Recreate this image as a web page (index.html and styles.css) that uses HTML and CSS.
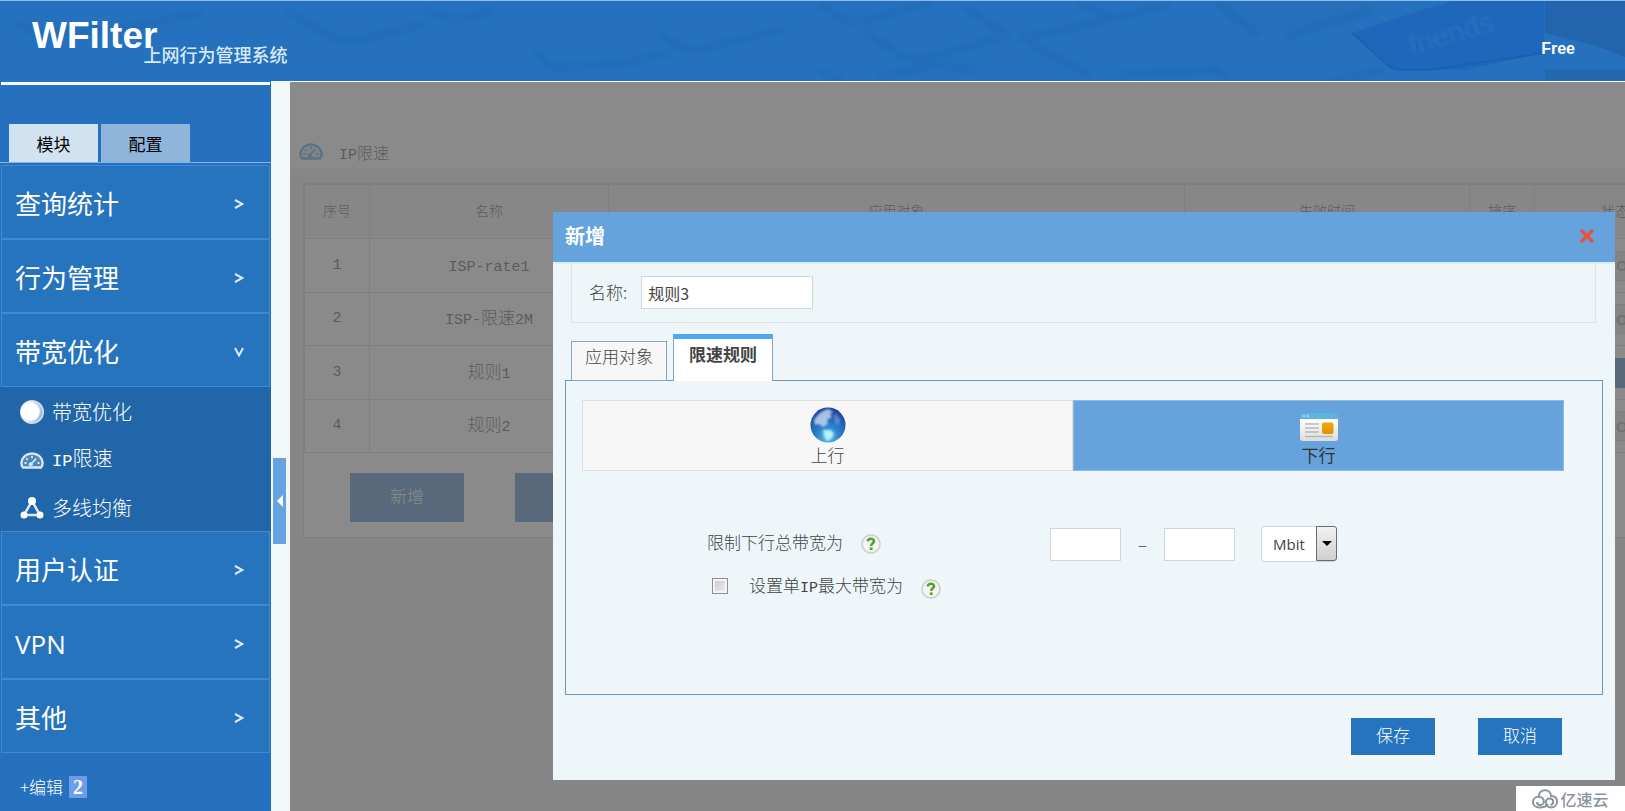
FILE: index.html
```html
<!DOCTYPE html>
<html lang="zh-CN">
<head>
<meta charset="utf-8">
<title>WFilter 上网行为管理系统</title>
<link rel="stylesheet" href="styles.css">
</head>
<body>
<svg width="0" height="0" class="defs" aria-hidden="true">
  <defs>
    <radialGradient id="globe" cx="50%" cy="85%" r="85%">
      <stop offset="0" stop-color="#5cc3e8"/><stop offset=".4" stop-color="#2a7fc8"/><stop offset="1" stop-color="#1a3c96"/>
    </radialGradient>
    <radialGradient id="ball" cx="42%" cy="48%" r="50%">
      <stop offset="0" stop-color="#fff"/><stop offset=".75" stop-color="#fff"/><stop offset="1" stop-color="#fff" stop-opacity="0"/>
    </radialGradient>
    <linearGradient id="paper" x1="0" y1="0" x2="0" y2="1">
      <stop offset="0" stop-color="#ffffff"/><stop offset="1" stop-color="#dcdcdc"/>
    </linearGradient>
    <linearGradient id="gold" x1="0" y1="0" x2="0" y2="1">
      <stop offset="0" stop-color="#f0a800"/><stop offset="1" stop-color="#e58f08"/>
    </linearGradient>
    <filter id="soft"><feGaussianBlur stdDeviation="2"/></filter>
    <filter id="soft-word"><feGaussianBlur stdDeviation="1"/></filter>
    <symbol id="gauge" viewBox="0 0 24 17">
      <path d="M3 15.500C1.500 14 1.200 12 1.500 10 2.200 5 6.500 1.500 12 1.500s9.800 3.500 10.500 8.500c.3 2 0 4-1.500 5.500z" fill="currentColor" fill-opacity=".25" stroke="currentColor" stroke-width="2.400"/>
      <path d="M4.500 11h2M6.200 6.500l1.500 1.300M12 4v2.200M17.500 11h2M10.800 12.500l5.400-6" fill="none" stroke="currentColor" stroke-width="1.800"/>
      <circle cx="10.800" cy="12.300" r="2" fill="currentColor"/>
    </symbol>
    <symbol id="help" viewBox="0 0 20 20">
      <circle cx="10" cy="10" r="9" fill="#f3f5f3" stroke="#cfd2d3" stroke-width="1.800"/>
      <path d="M6.800 7.400C7 5.400 8.400 4.800 10 4.800c1.700 0 3 .9 3 2.500 0 2.100-2.800 2-2.800 4.600" fill="none" stroke="#5a9e2d" stroke-width="2.600"/>
      <rect x="8.800" y="13.400" width="2.800" height="2.600" fill="#5a9e2d"/>
    </symbol>
    <symbol id="chevron" viewBox="0 0 10 10">
      <path d="M1 1l7.500 4L1 9" fill="none" stroke="#d9edfb" stroke-width="2"/>
    </symbol>
  </defs>
</svg>

<header class="header">
  <svg class="header-art" viewBox="0 0 1625 80" preserveAspectRatio="xMidYMid slice" aria-hidden="true">
    <g fill="none" stroke="#1f5ea8" stroke-opacity=".4" stroke-width="5" filter="url(#soft)">
      <path d="M15 22l25 12 90-8 72-14M288 10l40 24q18 10 35 4l60-14M425 8q30 20 70-1M536 52l16 15 70-4 48-12M660 32l22 16q12 3 20 0l82-20M820 4l28 16q12 2 24-2l60-18M864 30l40 26q12 4 24 1l72-20M965 6l45 30M1020 38l84-18M1080 2l30 16 60-14M1030 42l60 32M1218 2l38 32M1285 36l85-26"/>
      <path d="M820 70l22 10M880 76l55-12 40 5M1216 70l16 10M1330 80l52-10M1120 74l100-6"/>
    </g>
    <path d="M1352 32l60-20 40-12h92v52l-80 17h-64q-10-1-14-6z" fill="#1c60b8" fill-opacity=".6"/>
    <path d="M1352 32l34 31q6 6 14 6h30l114-17" fill="none" stroke="#1b5599" stroke-opacity=".4" stroke-width="2"/>
    <path d="M1256 34l-38-34h165v10z" fill="#2767ae" fill-opacity=".2"/>
    <path d="M1545 0h80v56l-32-12-48-12z" fill="#205690" fill-opacity=".4"/>
    <path d="M1545 68h80v12h-80z" fill="#205690" fill-opacity=".3"/>
    <text x="1412" y="54" class="art-word" transform="rotate(-16 1412 54)" filter="url(#soft-word)">friends</text>
  </svg>
  <div class="brand"><span class="brand-name">WFilter</span><span class="brand-sub">上网行为管理系统</span></div>
  <span class="edition">Free</span>
</header>

<div class="layout">
  <nav class="sidebar">
    <div class="rule"></div>
    <div class="side-tabs">
      <button type="button" class="side-tab side-tab-on">模块</button>
      <button type="button" class="side-tab">配置</button>
    </div>
    <ul class="menu">
      <li><a class="menu-item" href="#"><span>查询统计</span><svg class="chev"><use href="#chevron"/></svg></a></li>
      <li><a class="menu-item" href="#"><span>行为管理</span><svg class="chev"><use href="#chevron"/></svg></a></li>
      <li><a class="menu-item" href="#"><span>带宽优化</span><svg class="chev chev-down"><use href="#chevron"/></svg></a>
        <ul class="submenu">
          <li><a class="sub-item" href="#"><svg class="sub-icon" viewBox="0 0 24 24"><circle cx="12" cy="12" r="11" fill="#7fa9d2" stroke="#c9dcee" stroke-width="2"/><circle cx="12" cy="12" r="11.500" fill="url(#ball)"/></svg>带宽优化</a></li>
          <li><a class="sub-item" href="#"><svg class="sub-icon gauge-light"><use href="#gauge"/></svg><span><span class="lat">IP</span>限速</span></a></li>
          <li><a class="sub-item" href="#"><svg class="sub-icon" viewBox="0 0 24 24"><path d="M12 5L4 19h16z" fill="none" stroke="#dcebf7" stroke-width="2.500"/><circle cx="12" cy="5" r="4" fill="#fff"/><circle cx="4" cy="19" r="3.500" fill="#fff"/><circle cx="20" cy="19" r="3.500" fill="#fff"/></svg>多线均衡</a></li>
        </ul>
      </li>
      <li><a class="menu-item" href="#"><span>用户认证</span><svg class="chev"><use href="#chevron"/></svg></a></li>
      <li><a class="menu-item" href="#"><span>VPN</span><svg class="chev"><use href="#chevron"/></svg></a></li>
      <li><a class="menu-item" href="#"><span>其他</span><svg class="chev"><use href="#chevron"/></svg></a></li>
    </ul>
    <div class="side-foot"><a href="#">+编辑</a><span class="count">2</span></div>
  </nav>

  <div class="gutter">
    <button type="button" class="handle" aria-label="收起"><svg viewBox="0 0 6 12" width="6" height="12"><path d="M6 0v12L0 6z" fill="#fff"/></svg></button>
  </div>

  <main class="main">
    <div class="page-title"><svg class="title-icon"><use href="#gauge"/></svg><h1><span class="lat">IP</span>限速</h1></div>
    <section class="card">
      <table class="rules">
        <colgroup><col class="c-no"><col class="c-name"><col class="c-target"><col class="c-time"><col class="c-sort"><col class="c-state"></colgroup>
        <thead><tr><th>序号</th><th>名称</th><th>应用对象</th><th>生效时间</th><th>排序</th><th>状态</th></tr></thead>
        <tbody>
          <tr><td class="lat">1</td><td><span class="lat">ISP-rate1</span></td><td></td><td></td><td></td><td><button type="button" class="switch">ON</button></td></tr>
          <tr><td class="lat">2</td><td><span class="lat">ISP-</span>限速<span class="lat">2M</span></td><td></td><td></td><td></td><td><button type="button" class="switch">ON</button></td></tr>
          <tr><td class="lat">3</td><td>规则<span class="lat">1</span></td><td></td><td></td><td></td><td><button type="button" class="switch switch-on" aria-label="ON"></button></td></tr>
          <tr><td class="lat">4</td><td>规则<span class="lat">2</span></td><td></td><td></td><td></td><td><button type="button" class="switch">ON</button></td></tr>
        </tbody>
      </table>
      <div class="card-actions"><button type="button" class="btn btn-lg">新增</button><button type="button" class="btn btn-lg" aria-label="删除"></button></div>
    </section>
    <div class="mask"></div>
  </main>
</div>

<div class="dialog" role="dialog" aria-labelledby="dlg-title">
  <div class="dialog-head">
    <h2 id="dlg-title">新增</h2>
    <button type="button" class="close" aria-label="关闭"><svg viewBox="0 0 16 16" width="16" height="16"><path d="M2 2l12 12M14 2L2 14" stroke="#e5543f" stroke-width="3.500"/></svg></button>
  </div>
  <div class="name-row"><label for="rule-name">名称:</label><input id="rule-name" class="field" type="text" value="规则3"></div>
  <div class="tabs">
    <button type="button" class="tab">应用对象</button>
    <button type="button" class="tab tab-on">限速规则</button>
  </div>
  <div class="panel">
    <div class="direction">
      <button type="button" class="dir">
        <svg viewBox="0 0 36 36" width="36" height="36"><circle cx="18" cy="18" r="17.500" fill="url(#globe)"/><g filter="url(#soft-word)"><path d="M7 9q5-6 12-7l4 3-3 2 2 3-5 3 1 4-5 3-4-3-4 1-1-5z" fill="#d5e2f5" fill-opacity=".75"/><path d="M25 6l5 6-1 7-4-3-1-5z" fill="#8fb2e0" fill-opacity=".5"/><path d="M13 23l8 0 3 4-3 5-4 2-3-5z" fill="#bff0fb" fill-opacity=".95"/></g></svg>
        <span>上行</span>
      </button>
      <button type="button" class="dir dir-on">
        <svg viewBox="0 0 38 36" width="38" height="36"><path d="M0 9q0-3 3-3h32q3 0 3 3v4H0z" fill="#5db5da"/><circle cx="4" cy="9" r="1.500" fill="#8fd4ef"/><circle cx="8" cy="9" r="1.500" fill="#8fd4ef"/><path d="M0 12h38v19q0 3-3 3H3q-3 0-3-3z" fill="url(#paper)"/><path d="M5 17h14M5 21h14M5 25h14M5 29.500h28" stroke="#b9b6b6" stroke-width="1.500"/><rect x="22" y="15.500" width="11.500" height="11.500" rx="2" fill="url(#gold)"/></svg>
        <span>下行</span>
      </button>
    </div>
    <div class="limits">
      <div class="limit-row">
        <div class="limit-label"><label for="bw-min">限制下行总带宽为</label><svg class="help"><use href="#help"/></svg></div>
        <div class="range">
          <input id="bw-min" class="field field-num" type="text" aria-label="最小带宽">
          <span class="dash">–</span>
          <input class="field field-num" type="text" aria-label="最大带宽">
          <div class="unit">
            <select aria-label="单位"><option>Mbit</option></select>
            <span class="unit-arrow"><svg viewBox="0 0 10 5" width="10" height="5"><path d="M0 0h10L5 5z" fill="#000"/></svg></span>
          </div>
        </div>
      </div>
      <div class="limit-row limit-row-ip">
        <input id="per-ip" type="checkbox"><label for="per-ip">设置单<span class="lat">IP</span>最大带宽为</label><svg class="help"><use href="#help"/></svg>
      </div>
    </div>
  </div>
  <div class="dialog-foot"><button type="button" class="btn">保存</button><button type="button" class="btn">取消</button></div>
</div>

<div class="mark">
  <svg viewBox="0 0 26 20" width="26" height="20" fill="none" stroke="#8a93a3" stroke-width="2"><path d="M7 8C6.500 3.500 9.500 1.200 13 1.200c3.800 0 6 2.600 6 5.800 3.500-.5 6 2 6 5.500s-2.500 6-5.800 6c-3.200 0-5.400-2.300-5.400-5 0-2.200 1.700-4 3.800-4s3.600 1.500 3.600 3.300-1.200 3-2.700 3M16 15c-1.500 2.500-4 3.500-8.500 3.500C3.500 18.500 1 16 1 13s2.500-5.300 5.700-5.300c3 0 5.100 2.100 5.100 4.700 0 2-1.600 3.600-3.600 3.600S5 14.500 5 13"/></svg>
  <span>亿速云</span>
</div>
</body>
</html>
```
FILE: styles.css
```css
* { box-sizing: border-box; }

body {
  margin: 0;
  min-height: 100vh;
  display: flex;
  flex-direction: column;
  position: relative;
  overflow: hidden;
  font: 300 17px/24px "Noto Sans CJK SC", "Noto Sans", sans-serif;
  color: #444;
  background: #2571be;
}

button, input, select { font: inherit; color: inherit; }
button { border: 0; padding: 0; background: none; cursor: pointer; }
a { color: inherit; text-decoration: none; }
ul { list-style: none; margin: 0; padding: 0; }
h1, h2 { margin: 0; }
.defs { position: absolute; }
.lat { font-family: "Liberation Mono", monospace; font-size: 15px; }

/* Header */
.header {
  position: relative;
  height: 81px;
  padding: 0 50px 0 32px;
  display: flex;
  align-items: center;
  justify-content: space-between;
  border-top: 1px solid #8bbdf0;
  background: #2571be;
  color: #fff;
  overflow: hidden;
}
.header-art { position: absolute; left: 0; top: 0; width: 100%; height: 100%; }
.art-word { font: 400 29px "Liberation Sans", sans-serif; fill: #3a7cc8; fill-opacity: .4; }
.brand { position: relative; display: flex; align-items: flex-start; }
.brand-name { font: 700 37px/42px "Liberation Sans", Arial, sans-serif; padding-bottom: 10px; }
.brand-sub { font-size: 18px; line-height: 24px; font-weight: 500; margin: 27px 0 0 -14px; color: #d9e9f8; }
.edition { position: relative; font: 700 16px/20px "Liberation Sans", Arial, sans-serif; padding-top: 15px; }

/* Shell */
.layout { flex: 1; display: flex; }
.sidebar { width: 271px; flex: none; padding-top: 1px; background: #2571be; color: #fff; }
.rule { height: 3px; margin: 0 1px; background: #f5fbfd; }
.side-tabs {
  display: flex;
  gap: 3px;
  padding: 39px 9px 0;
  border-bottom: 1px solid #83b6e8;
}
.side-tab {
  width: 89px;
  height: 38px;
  padding-top: 2px;
  background: #8fb5da;
  color: #000;
  font-weight: 400;
}
.side-tab-on { background: #d1e2f1; }
.menu { padding-top: 2px; }
.menu-item {
  display: flex;
  align-items: center;
  justify-content: space-between;
  height: 74px;
  margin: 0 1px;
  padding: 3px 25px 0 13px;
  border: 1px solid #3f89d5;
  font: 400 26px/32px "Open Sans", "Noto Sans CJK SC", sans-serif;
  background: #2673be;
}
.chev { width: 10px; height: 10px; }
.chev-down { transform: rotate(90deg); }
.submenu { background: #2166a8; }
.sub-item {
  display: flex;
  align-items: center;
  gap: 8px;
  height: 48px;
  padding: 2px 0 0 20px;
  font-size: 20px;
}
.sub-item .lat { font-size: 17px; }
.sub-icon { width: 24px; height: 24px; color: #d5e6f5; }
.gauge-light { height: 17px; }
.side-foot { display: flex; align-items: center; gap: 6px; padding: 23px 20px 12px; font-size: 17px; line-height: 22px; }
.count { width: 18px; background: #6b9de9; text-align: center; font: 700 20px/22px "Liberation Serif", serif; }

.gutter { width: 19px; flex: none; display: flex; align-items: center; padding: 110px 0 0 2px; background: #f0f8f8; }
.handle { width: 13px; height: 86px; display: flex; align-items: center; justify-content: center; background: #66a3e0; }

/* Page behind the dialog */
.main {
  position: relative;
  flex: 1;
  min-width: 0;
  overflow: hidden;
  border-top: 1px solid #fff;
  background: #ebeef0;
  color: #333;
}
.mask { position: absolute; inset: 0; background: rgba(103, 103, 103, .77); }
.page-title {
  display: flex;
  align-items: center;
  gap: 16px;
  height: 88px;
  padding: 56px 0 0 9px;
  border-bottom: 1px solid #e2e2e2;
  background: #fff;
  margin-bottom: 13px;
}
.title-icon { width: 24px; height: 17px; color: #2d9be0; margin-bottom: 4px; }
.page-title h1 { font-size: 16px; font-weight: 300; }
.card { width: 1394px; margin-left: 13px; background: #fff; border: 1px solid #d4d4d4; }
.rules { width: 100%; table-layout: fixed; border-collapse: collapse; }
.rules th, .rules td { border: 1px solid #cdcdcd; text-align: center; padding: 0; height: 54px; font-weight: 300; }
.rules tbody tr:nth-child(even) td { height: 53px; }
.rules th { font-size: 14px; background: #f3f3f3; padding-bottom: 4px; }
.c-no { width: 65px; }
.c-name { width: 239px; }
.c-target { width: 576px; }
.c-time { width: 285px; }
.c-sort { width: 65px; }
.switch { display: block; margin-left: 66px; width: 60px; height: 30px; text-align: left; padding-left: 14px; font: 700 15px "Liberation Sans", sans-serif; color: #999; background: #e6e6e6; border: 1px solid #ccc; }
.switch-on { background: #2571be; border-color: #2571be; }
.card-actions { display: flex; gap: 51px; padding: 20px 46px 15px; }

.btn { width: 84px; height: 37px; padding-bottom: 4px; background: #2673be; color: #fff; }
.btn-lg { width: 114px; height: 49px; }

/* Dialog */
.dialog {
  position: absolute;
  top: 212px;
  left: 553px;
  right: 10px;
  background: #eef6fa;
}
.dialog-head {
  height: 52px;
  display: flex;
  align-items: center;
  justify-content: space-between;
  padding: 0 20px 2px 12px;
  background: #66a3dd;
  border-bottom: 2px solid #d9f0fc;
}
.dialog-head h2 { font-size: 20px; font-weight: 700; color: #fff; }
.close { display: flex; }
.name-row {
  display: flex;
  align-items: center;
  gap: 14px;
  margin: 0 19px 0 18px;
  padding: 12px 17px 13px;
  border: 1px solid #dde3e8;
  border-top: 0;
}
.name-row label { padding-bottom: 2px; }
.field {
  width: 172px;
  height: 33px;
  padding: 0 6px;
  border: 1px solid #cfd6dc;
  background: #fff;
  font-size: 16px;
  font-weight: 400;
}
.field-num { width: 71px; }
.tabs { position: relative; display: flex; align-items: flex-end; gap: 6px; padding: 11px 18px 0; margin-bottom: -1px; }
.tab { height: 40px; padding: 0 13px 11px; border: 1px solid #86a5c6; background: #f7f7f7; }
.tab-on {
  height: 47px;
  padding: 0 15px 12px;
  border-top: 5px solid #49a9f8;
  border-bottom: 0;
  background: #fff;
  font-weight: 700;
}
.panel { margin: 0 12px; height: 315px; border: 1px solid #7096b8; padding: 19px 38px 0 16px; }
.direction { display: flex; }
.dir {
  flex: 1;
  height: 71px;
  padding-top: 2px;
  display: flex;
  flex-direction: column;
  align-items: center;
  justify-content: center;
  line-height: 24px;
  border: 1px solid #dedede;
  background: #f7f7f7;
}
.dir-on { background: #66a3dd; border-color: #8dbbe6; font-weight: 400; color: #333; }
.limits { padding: 55px 0 0 125px; }
.limit-row { display: flex; align-items: center; }
.limit-row label { padding-bottom: 4px; }
.limit-label { width: 343px; display: flex; align-items: center; gap: 18px; }
.help { width: 20px; height: 20px; }
.range { display: flex; align-items: center; }
.dash { width: 43px; text-align: center; }
.unit { position: relative; margin-left: 26px; }
.unit select {
  appearance: none;
  display: block;
  width: 76px;
  height: 36px;
  padding: 0 24px 0 11px;
  border: 1px solid #cdd5dc;
  border-radius: 4px;
  background: #fff;
  font: 400 15px "Open Sans", sans-serif;
}
.unit-arrow {
  position: absolute;
  top: 0;
  right: 0;
  width: 21px;
  height: 35px;
  display: flex;
  align-items: center;
  justify-content: center;
  border: 1px solid #6c6c6c;
  border-radius: 0 3px 3px 0;
  background: linear-gradient(#f2f2f2, #cfcfcf);
  pointer-events: none;
}
.limit-row-ip { padding: 11px 0 0 5px; }
.limit-row-ip label { margin: 0 18px 0 21px; }
.limit-row-ip input {
  appearance: none;
  width: 16px;
  height: 16px;
  margin: 0 0 6px;
  border: 1px solid #8e8f8f;
  box-shadow: inset 0 0 0 2px #f4f4f4;
  background: linear-gradient(135deg, #c4c8cc, #f2f2f2);
}
.dialog-foot { display: flex; justify-content: flex-end; gap: 43px; padding: 23px 53px 25px; }

.mark {
  position: absolute;
  right: 0;
  bottom: 0;
  width: 109px;
  height: 25px;
  display: flex;
  align-items: center;
  justify-content: center;
  gap: 2px;
  background: #fff;
  color: #8a93a3;
  font-size: 16px;
  font-weight: 500;
}
```
